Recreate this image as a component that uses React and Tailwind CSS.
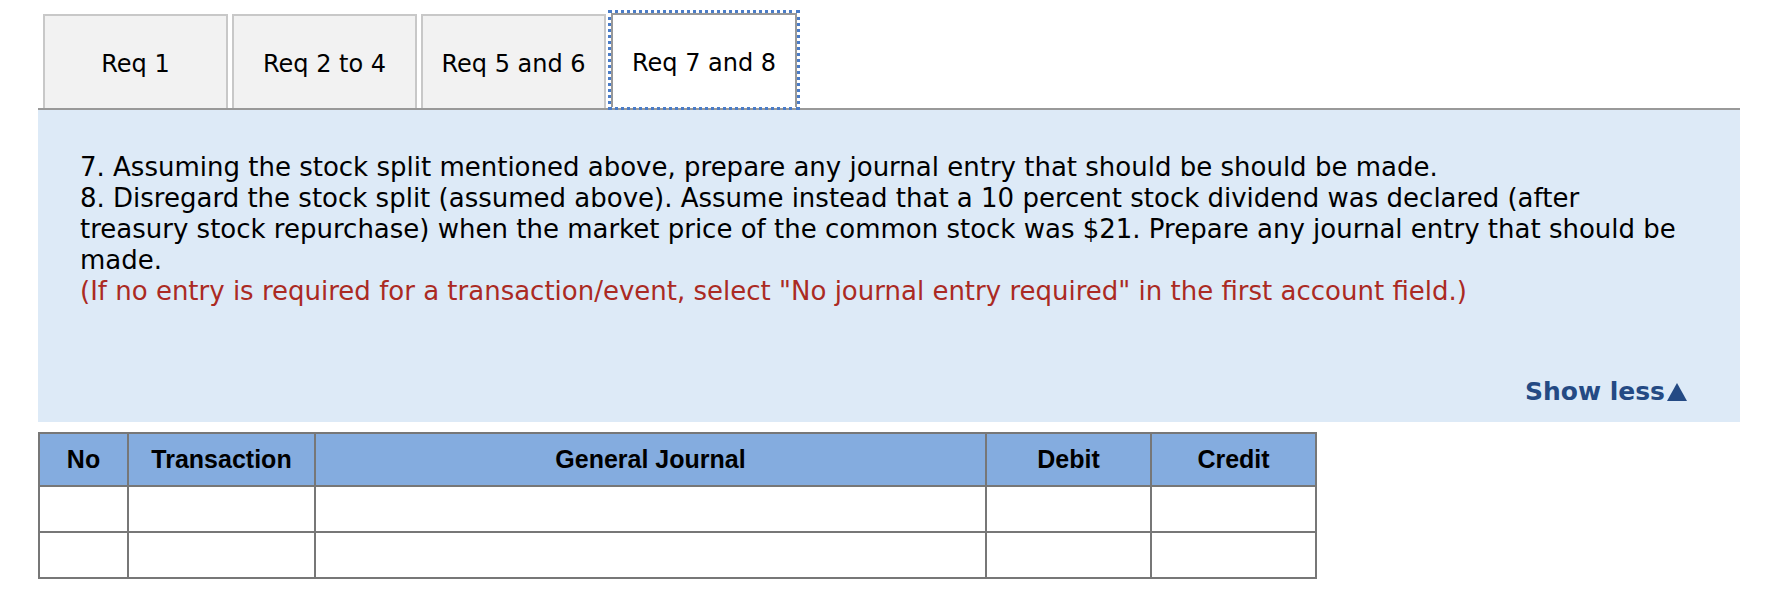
import React, { useState } from "react";

const tabs = ["Req 1", "Req 2 to 4", "Req 5 and 6", "Req 7 and 8"];

const columns = [
  { label: "No", width: "w-[89px]" },
  { label: "Transaction", width: "w-[187px]" },
  { label: "General Journal", width: "w-[671px]" },
  { label: "Debit", width: "w-[165px]" },
  { label: "Credit", width: "w-[165px]" },
];

const App = () => {
  const [active, setActive] = useState(3);
  const [expanded, setExpanded] = useState(true);

  return (
    <div className="w-[1782px] h-[598px] bg-white font-['DejaVu_Sans',Verdana,sans-serif] text-black">
      {/* Tabs */}
      <div className="pt-[11px] pl-[38px] pr-[42px]">
        <div className="flex items-end border-b-2 border-[#999999] h-[99px]">
          <div className="w-[5px]" />
          {tabs.map((t, i) =>
            i === active ? (
              <div
                key={t}
                className="ml-[2px] -mb-[2px] h-[100px] w-[192px] border-[3px] border-dotted border-[#4a7cc7]"
              >
                <button className="w-full h-full pt-[3px] bg-white border-2 border-b-0 border-[#999999] text-[24px] leading-none">
                  {t}
                </button>
              </div>
            ) : (
              <button
                key={t}
                onClick={() => setActive(i)}
                className={`h-[94px] w-[185px] pt-[3px] bg-[#f2f2f2] border-2 border-b-0 border-[#c8c8c8] text-[24px] leading-none ${
                  i > 0 ? "ml-[4px]" : ""
                }`}
              >
                {t}
              </button>
            )
          )}
        </div>
      </div>

      {/* Instructions */}
      <div className="mx-[38px] mr-[42px] bg-[#ddeaf7] pt-[42px] pl-[42px] pr-[52px] h-[312px] flex flex-col">
        {expanded && (
          <div className="text-[26px] leading-[31px]">
            <p>7. Assuming the stock split mentioned above, prepare any journal entry that should be should be made.</p>
            <p>
              8. Disregard the stock split (assumed above). Assume instead that a 10 percent stock dividend was declared (after
              <br />
              treasury stock repurchase) when the market price of the common stock was $21. Prepare any journal entry that should be
              <br />
              made.
            </p>
            <p className="text-[#ab2a23]">
              (If no entry is required for a transaction/event, select "No journal entry required" in the first account field.)
            </p>
          </div>
        )}
        <div className="mt-auto mb-[18px] flex justify-end">
          <button
            onClick={() => setExpanded(!expanded)}
            className="flex items-center font-bold text-[25px] text-[#244a84] leading-none"
          >
            {expanded ? "Show less" : "Show more"}
            <svg width="22" height="20" viewBox="0 0 22 20" className="ml-[1px]">
              <path d={expanded ? "M11 1 L21 19 L1 19 Z" : "M1 1 L21 1 L11 19 Z"} fill="#244a84" />
            </svg>
          </button>
        </div>
      </div>

      {/* Journal table */}
      <div className="pl-[38px] pt-[10px]">
        <table className="border-collapse border-2 border-[#777777] font-['Liberation_Sans',Arial,sans-serif]">
          <thead>
            <tr className="bg-[#84acdf] h-[53px]">
              {columns.map((c) => (
                <th
                  key={c.label}
                  className={`${c.width} border-2 border-[#777777] text-[25px] font-bold text-center`}
                >
                  {c.label}
                </th>
              ))}
            </tr>
          </thead>
          <tbody>
            {[0, 1].map((r) => (
              <tr key={r} className="h-[46px]">
                {columns.map((c) => (
                  <td key={c.label} className="border-2 border-[#777777]" />
                ))}
              </tr>
            ))}
          </tbody>
        </table>
      </div>
    </div>
  );
};

export default App;
